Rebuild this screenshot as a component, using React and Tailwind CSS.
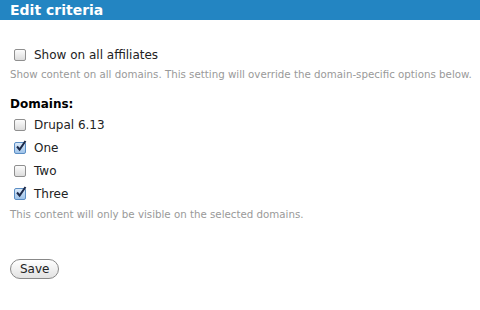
function Box({ checked }) {
  return (
    <span
      className={`relative inline-block w-[12px] h-[12px] rounded-[2px] border ${
        checked
          ? "border-[#5b8ec4] bg-gradient-to-b from-[#dbe9f8] to-[#9ec3ea]"
          : "border-[#8f8f8f] bg-gradient-to-b from-[#fcfcfc] to-[#dcdcdc]"
      }`}
    >
      {checked && (
        <svg
          viewBox="0 0 12 12"
          className="absolute left-[0px] top-[-3px] w-[12px] h-[12px]"
        >
          <path
            d="M2 6.5 L4.6 9.5 L10.5 1"
            fill="none"
            stroke="#1c2a4a"
            strokeWidth="2"
          />
        </svg>
      )}
    </span>
  );
}

function Check({ label, checked }) {
  return (
    <label className="flex items-center gap-[8px] h-[23px] text-[12px] text-[#222]">
      <Box checked={checked} />
      <span>{label}</span>
    </label>
  );
}

export default function App() {
  const domains = [
    { name: "Drupal 6.13", checked: false },
    { name: "One", checked: true },
    { name: "Two", checked: false },
    { name: "Three", checked: true },
  ];

  return (
    <div
      className="w-[480px] h-[310px] bg-white overflow-hidden"
      style={{ fontFamily: '"DejaVu Sans", Verdana, sans-serif' }}
    >
      <div className="h-[20px] bg-[#2385c2] px-[10px] text-white font-bold text-[14px] leading-[20px]">
        Edit criteria
      </div>

      <div className="px-[14px] pt-[23px]">
        <Check label="Show on all affiliates" checked={false} />
        <p className="-ml-[4px] mt-[1px] whitespace-nowrap text-[10.25px] text-[#999]">
          Show content on all domains. This setting will override the
          domain-specific options below.
        </p>

        <h3 className="-ml-[4px] mt-[15px] text-[12px] font-bold text-black leading-[15px]">
          Domains:
        </h3>
        <div className="mt-[1px]">
          {domains.map((d) => (
            <Check key={d.name} label={d.name} checked={d.checked} />
          ))}
        </div>
        <p className="-ml-[4px] mt-[2px] whitespace-nowrap text-[10.25px] text-[#999]">
          This content will only be visible on the selected domains.
        </p>

        <button className="-ml-[4px] mt-[36px] h-[20px] px-[9px] rounded-full border border-[#888] bg-gradient-to-b from-white to-[#e2e2e2] text-[12px] text-[#222] leading-[18px]">
          Save
        </button>
      </div>
    </div>
  );
}
